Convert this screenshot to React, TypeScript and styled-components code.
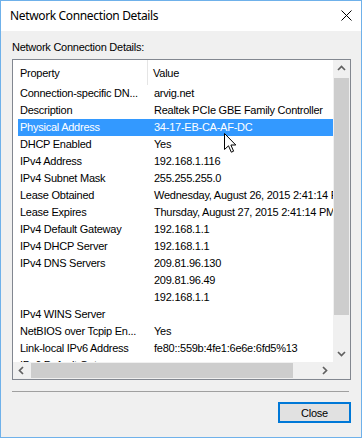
import styled, { createGlobalStyle } from "styled-components";

const GlobalStyle = createGlobalStyle`
  html, body {
    margin: 0;
    padding: 0;
    background: #ffffff;
  }
  * {
    box-sizing: border-box;
  }
`;

type Detail = [string, string, boolean?];

const details: Detail[] = [
  ["Connection-specific DN...", "arvig.net"],
  ["Description", "Realtek PCIe GBE Family Controller"],
  ["Physical Address", "34-17-EB-CA-AF-DC", true],
  ["DHCP Enabled", "Yes"],
  ["IPv4 Address", "192.168.1.116"],
  ["IPv4 Subnet Mask", "255.255.255.0"],
  ["Lease Obtained", "Wednesday, August 26, 2015 2:41:14 PM"],
  ["Lease Expires", "Thursday, August 27, 2015 2:41:14 PM"],
  ["IPv4 Default Gateway", "192.168.1.1"],
  ["IPv4 DHCP Server", "192.168.1.1"],
  ["IPv4 DNS Servers", "209.81.96.130"],
  ["", "209.81.96.49"],
  ["", "192.168.1.1"],
  ["IPv4 WINS Server", ""],
  ["NetBIOS over Tcpip En...", "Yes"],
  ["Link-local IPv6 Address", "fe80::559b:4fe1:6e6e:6fd5%13"],
  ["IPv6 Default Gateway", ""],
];

function Chevron({ dir }: { dir: "up" | "down" | "left" | "right" }) {
  const rot = { up: 0, right: 90, down: 180, left: 270 }[dir];
  return (
    <svg width="9" height="9" viewBox="0 0 9 9">
      <polyline
        points="1,6 4.5,2.5 8,6"
        fill="none"
        stroke="#606060"
        strokeWidth="1.7"
        transform={`rotate(${rot} 4.5 4.5)`}
      />
    </svg>
  );
}

export default function App() {
  return (
    <>
      <GlobalStyle />
      <Window>
        <TitleBar>
          <Title>Network Connection Details</Title>
          <CloseGlyph>
            <svg width="11" height="11" viewBox="0 0 11 11">
              <path d="M0.5 0.5 L10.5 10.5 M10.5 0.5 L0.5 10.5" stroke="#000" strokeWidth="1" />
            </svg>
          </CloseGlyph>
        </TitleBar>
        <Body>
          <Label>Network Connection Details:</Label>
          <ListBox>
            <Viewport>
              <Header>
                <HeaderCell $first>Property</HeaderCell>
                <HeaderCell>Value</HeaderCell>
              </Header>
              {details.map(([prop, value, selected], i) => (
                <Row key={i} $selected={!!selected}>
                  <PropCell>{prop}</PropCell>
                  <ValueCell>{value}</ValueCell>
                </Row>
              ))}
            </Viewport>
            <VScroll>
              <ArrowBox>
                <Chevron dir="up" />
              </ArrowBox>
              <VThumb $size={237} />
              <Track />
              <ArrowBox>
                <Chevron dir="down" />
              </ArrowBox>
            </VScroll>
            <HScroll>
              <ArrowBox>
                <Chevron dir="left" />
              </ArrowBox>
              <HThumb $size={262} />
              <Track />
              <ArrowBox>
                <Chevron dir="right" />
              </ArrowBox>
            </HScroll>
            <Corner />
          </ListBox>
          <Separator />
          <Footer>
            <CloseButton>Close</CloseButton>
          </Footer>
        </Body>
        <Cursor>
          <svg width="13" height="21" viewBox="0 0 13 21">
            <path
              d="M0.5 0.5 L0.5 16.5 L4.5 12.8 L7.3 19.2 L9.6 18.2 L6.9 12 L11.8 12 Z"
              fill="#ffffff"
              stroke="#000000"
              strokeWidth="1"
              strokeLinejoin="miter"
            />
          </svg>
        </Cursor>
      </Window>
    </>
  );
}

const Window = styled.div`
  position: relative;
  width: 362px;
  height: 438px;
  display: flex;
  flex-direction: column;
  border: 1px solid #6fb1ea;
  background: #f0f0f0;
  overflow: hidden;
`;

const TitleBar = styled.div`
  display: flex;
  align-items: center;
  justify-content: space-between;
  height: 30px;
  padding: 0 9px 0 9px;
  background: #ffffff;
`;

const Title = styled.div`
  font-family: "Noto Sans", "Liberation Sans", sans-serif;
  font-size: 12px;
  letter-spacing: -0.35px;
  color: #000;
  padding-bottom: 1px;
`;

const CloseGlyph = styled.div`
  display: flex;
  width: 11px;
  height: 11px;
  margin-bottom: 1px;
`;

const Body = styled.div`
  flex: 1;
  display: flex;
  flex-direction: column;
  padding: 10px 10px 0 11px;
  font-family: "Liberation Sans", Arial, sans-serif;
  font-size: 11px;
  letter-spacing: -0.25px;
  color: #000;
`;

const Label = styled.div`
  height: 13px;
  line-height: 13px;
  margin-bottom: 5px;
`;

const ListBox = styled.div`
  height: 321px;
  display: grid;
  grid-template-columns: 1fr 17px;
  grid-template-rows: 1fr 17px;
  border: 1px solid #828790;
  background: #ffffff;
`;

const Viewport = styled.div`
  overflow: hidden;
  background: #ffffff;
`;

const Header = styled.div`
  display: flex;
  height: 25px;
  align-items: stretch;
`;

const HeaderCell = styled.div<{ $first?: boolean }>`
  display: flex;
  align-items: center;
  width: ${(p) => (p.$first ? "135px" : "auto")};
  padding-left: ${(p) => (p.$first ? "7px" : "5px")};
  border-right: ${(p) => (p.$first ? "1px solid #e5e5e5" : "none")};
  white-space: nowrap;
`;

const Row = styled.div<{ $selected: boolean }>`
  display: grid;
  grid-template-columns: 130px 1fr;
  height: 17px;
  line-height: 17px;
  margin-left: 5px;
  white-space: nowrap;
  overflow: hidden;
  background: ${(p) => (p.$selected ? "#3399ff" : "transparent")};
  color: ${(p) => (p.$selected ? "#ffffff" : "#000000")};
`;

const PropCell = styled.div`
  padding-left: 2px;
  overflow: hidden;
`;

const ValueCell = styled.div`
  padding-left: 6px;
  overflow: hidden;
`;

const VScroll = styled.div`
  display: flex;
  flex-direction: column;
  background: #f0f0f0;
`;

const HScroll = styled.div`
  display: flex;
  background: #f0f0f0;
`;

const ArrowBox = styled.div`
  flex: 0 0 17px;
  display: flex;
  align-items: center;
  justify-content: center;
`;

const VThumb = styled.div<{ $size: number }>`
  flex: 0 0 ${(p) => p.$size}px;
  margin: 1px 1px 0 1px;
  background: #cdcdcd;
`;

const HThumb = styled.div<{ $size: number }>`
  flex: 0 0 ${(p) => p.$size}px;
  margin: 1px 0 1px 1px;
  background: #cdcdcd;
`;

const Track = styled.div`
  flex: 1;
`;

const Corner = styled.div`
  background: #f0f0f0;
`;

const Separator = styled.div`
  height: 1px;
  margin: 11px 2px 0 0;
  background: #a0a0a0;
`;

const Footer = styled.div`
  display: flex;
  justify-content: flex-end;
  padding-top: 10px;
`;

const CloseButton = styled.button`
  width: 73px;
  height: 21px;
  padding: 0;
  border: 2px solid #0078d7;
  background: #e1e1e1;
  font-family: "Liberation Sans", Arial, sans-serif;
  font-size: 11px;
  letter-spacing: -0.25px;
  color: #000;
`;

const Cursor = styled.div`
  position: absolute;
  left: 223px;
  top: 132px;
  width: 13px;
  height: 21px;
  pointer-events: none;
`;
